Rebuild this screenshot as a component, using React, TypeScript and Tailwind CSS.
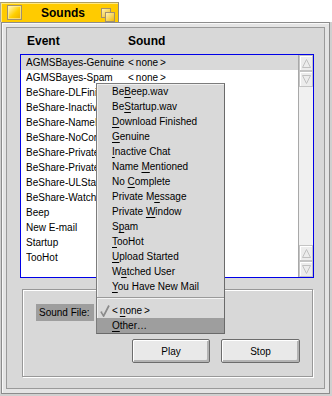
import React from "react";

const font = { fontFamily: '"Liberation Sans", Arial, sans-serif' };

const rows: [string, string][] = [
  ["AGMSBayes-Genuine", "<none>"],
  ["AGMSBayes-Spam", "<none>"],
  ["BeShare-DLFinished", "<none>"],
  ["BeShare-InactiveChat", "<none>"],
  ["BeShare-NameMentioned", "<none>"],
  ["BeShare-NoComplete", "<none>"],
  ["BeShare-PrivateMessage", "<none>"],
  ["BeShare-PrivateWindow", "<none>"],
  ["BeShare-ULStarted", "<none>"],
  ["BeShare-WatchedUser", "<none>"],
  ["Beep", "<none>"],
  ["New E-mail", "<none>"],
  ["Startup", "<none>"],
  ["TooHot", "<none>"],
];

const items: [string, string, string][] = [
  ["Be", "B", "eep.wav"],
  ["Be", "S", "tartup.wav"],
  ["", "D", "ownload Finished"],
  ["", "G", "enuine"],
  ["", "I", "nactive Chat"],
  ["Name ", "M", "entioned"],
  ["No ", "C", "omplete"],
  ["Private M", "e", "ssage"],
  ["Private ", "W", "indow"],
  ["S", "p", "am"],
  ["", "T", "ooHot"],
  ["", "U", "pload Started"],
  ["W", "a", "tched User"],
  ["", "Y", "ou Have New Mail"],
];

function Mn({ a, u, b }: { a: string; u: string; b: string }) {
  return (
    <span className="whitespace-pre">
      {a}
      <span className="underline underline-offset-[2px]">{u}</span>
      {b}
    </span>
  );
}

function ArrowBox({ up }: { up: boolean }) {
  return (
    <div className="h-[16px] w-full border border-[#c4c4c4] bg-[#ececec] shadow-[inset_1px_1px_0_#ffffff] flex items-center justify-center">
      <svg width="9" height="9" viewBox="0 0 9 9">
        {up ? (
          <polygon points="4.5,0.5 8.5,8.5 0.5,8.5" fill="none" stroke="#c0c0c0" strokeWidth="1" />
        ) : (
          <polygon points="0.5,0.5 8.5,0.5 4.5,8.5" fill="none" stroke="#c0c0c0" strokeWidth="1" />
        )}
      </svg>
    </div>
  );
}

const none = "<\u2009none\u2009>";

export default function App() {
  return (
    <div className="relative w-[332px] h-[396px] bg-white overflow-hidden text-black" style={font}>
      {/* Title tab */}
      <div className="h-[22px] pt-[2px]">
        <div className="relative w-[119px] h-[20px] border-l border-t border-r border-l-[#a8a8a8] border-t-[#b0a060] border-r-[#8a8a8a] bg-[#ffcb00] shadow-[inset_1px_1px_0_#ffe880] flex items-center">
          <svg className="ml-[6px]" width="15" height="15" viewBox="0 0 15 15">
            <defs>
              <linearGradient id="cg" x1="0" y1="0" x2="1" y2="1">
                <stop offset="0" stopColor="#fffbe0" />
                <stop offset="0.55" stopColor="#ffd000" />
                <stop offset="1" stopColor="#e8a800" />
              </linearGradient>
            </defs>
            <rect x="0.5" y="0.5" width="14" height="14" fill="url(#cg)" stroke="#a09070" />
            <rect x="1.5" y="1.5" width="12" height="12" fill="none" stroke="#fff4b0" strokeOpacity="0.6" />
          </svg>
          <span className="ml-[19px] text-[12px] font-bold leading-[14px]">Sounds</span>
          <svg className="absolute left-[100px] top-[5px]" width="15" height="15" viewBox="0 0 15 15">
            <defs>
              <linearGradient id="zg" x1="0" y1="0" x2="1" y2="1">
                <stop offset="0" stopColor="#fff6c0" />
                <stop offset="1" stopColor="#f0b800" />
              </linearGradient>
            </defs>
            <rect x="0.5" y="0.5" width="9" height="9" fill="url(#zg)" stroke="#a09070" />
            <rect x="4.5" y="4.5" width="9" height="9" fill="url(#zg)" stroke="#a09070" />
          </svg>
        </div>
      </div>

      {/* Window frame */}
      <div className="w-[332px] h-[374px] bg-[#d0d0d0] pl-[1px] pr-[2px] pb-[2px]">
        <div className="h-full border border-[#8c8c8c] bg-[#e4e4e4] p-[4px] shadow-[inset_1px_1px_0_#f8f8f8]">
          <div className="h-full border border-[#9a9a9a] bg-[#d8d8d8] flex flex-col">
            {/* Header */}
            <div className="mt-[6px] h-[14px] flex pl-[20px] text-[12px] font-bold leading-[14px]">
              <span className="w-[101px]">Event</span>
              <span>Sound</span>
            </div>

            {/* List */}
            <div className="mt-[6px] ml-[13px] w-[294px] h-[224px] border border-[#0000e8] bg-white flex">
              <div className="flex-1 flex flex-col text-[10px]">
                {rows.map(([e, s], i) => (
                  <div
                    key={i}
                    className={`h-[15px] leading-[15px] flex pl-[5px] whitespace-nowrap overflow-hidden ${i === 0 ? "bg-[#d9d9d9]" : ""}`}
                  >
                    <span className="w-[102px] shrink-0 overflow-hidden">{e}</span>
                    <span className="whitespace-pre">{s === "<none>" ? none : s}</span>
                  </div>
                ))}
              </div>
              <div className="w-[15px] border-l border-[#a8a8a8] bg-[#f0f0f0] flex flex-col justify-between">
                <div>
                  <ArrowBox up />
                  <ArrowBox up={false} />
                </div>
                <div>
                  <ArrowBox up />
                  <ArrowBox up={false} />
                </div>
              </div>
            </div>

            {/* Group box */}
            <div className="mt-[11px] ml-[15px] w-[291px] h-[88px] border border-[#989898] shadow-[1px_1px_0_#ffffff,inset_1px_1px_0_#ffffff] flex flex-col pt-[14px] pl-[13px] pr-[12px]">
              <div className="w-[58px] h-[17px] bg-[#9e9e9e] text-[10px] leading-[17px] pl-[3px]">Sound File:</div>
              <div className="mt-[18px] flex justify-end gap-[11px]">
                <button className="w-[78px] h-[24px] border border-[#6c6c6c] rounded-[2px] bg-[#e9e9e9] shadow-[inset_1px_1px_0_#ffffff,inset_-2px_-2px_0_#b4b4b4] text-[10px]">
                  Play
                </button>
                <button className="w-[79px] h-[24px] border border-[#6c6c6c] rounded-[2px] bg-[#e9e9e9] shadow-[inset_1px_1px_0_#ffffff,inset_-2px_-2px_0_#b4b4b4] text-[10px]">
                  Stop
                </button>
              </div>
            </div>
          </div>
        </div>
      </div>

      {/* Popup menu */}
      <div className="absolute left-[96px] top-[83px] w-[129px] h-[251px] border border-[#7c7c7c] border-r-[#6a6a6a] border-b-[#6a6a6a] bg-[#d9d9d9] shadow-[inset_1px_1px_0_#f0f0f0] flex flex-col text-[10px]">
        {items.map(([a, u, b], i) => (
          <div key={i} className="h-[15px] leading-[15px] pl-[15px] whitespace-nowrap">
            <Mn a={a} u={u} b={b} />
          </div>
        ))}
        <div className="h-[9px] pt-[3px]">
          <div className="h-[1px] bg-[#9a9a9a]" />
          <div className="h-[1px] bg-[#f4f4f4]" />
        </div>
        <div className="relative h-[15px] leading-[15px] pl-[15px] whitespace-nowrap">
          <svg className="absolute left-[3px] top-[2px]" width="10" height="12" viewBox="0 0 10 12">
            <path d="M1 6.5 L3.6 11 L9 0.5" fill="none" stroke="#8a8a8a" strokeWidth="1.7" />
            <path d="M1.8 6 L3.7 9.2" fill="none" stroke="#c8c8c8" strokeWidth="0.8" />
          </svg>
          <span className="whitespace-pre">
            {"<\u2009"}
            <span className="underline underline-offset-[2px]">n</span>
            {"one\u2009>"}
          </span>
        </div>
        <div className="h-[15px] leading-[15px] pl-[15px] whitespace-nowrap bg-[#9e9e9e]">
          <Mn a="" u="O" b="ther…" />
        </div>
      </div>
    </div>
  );
}
